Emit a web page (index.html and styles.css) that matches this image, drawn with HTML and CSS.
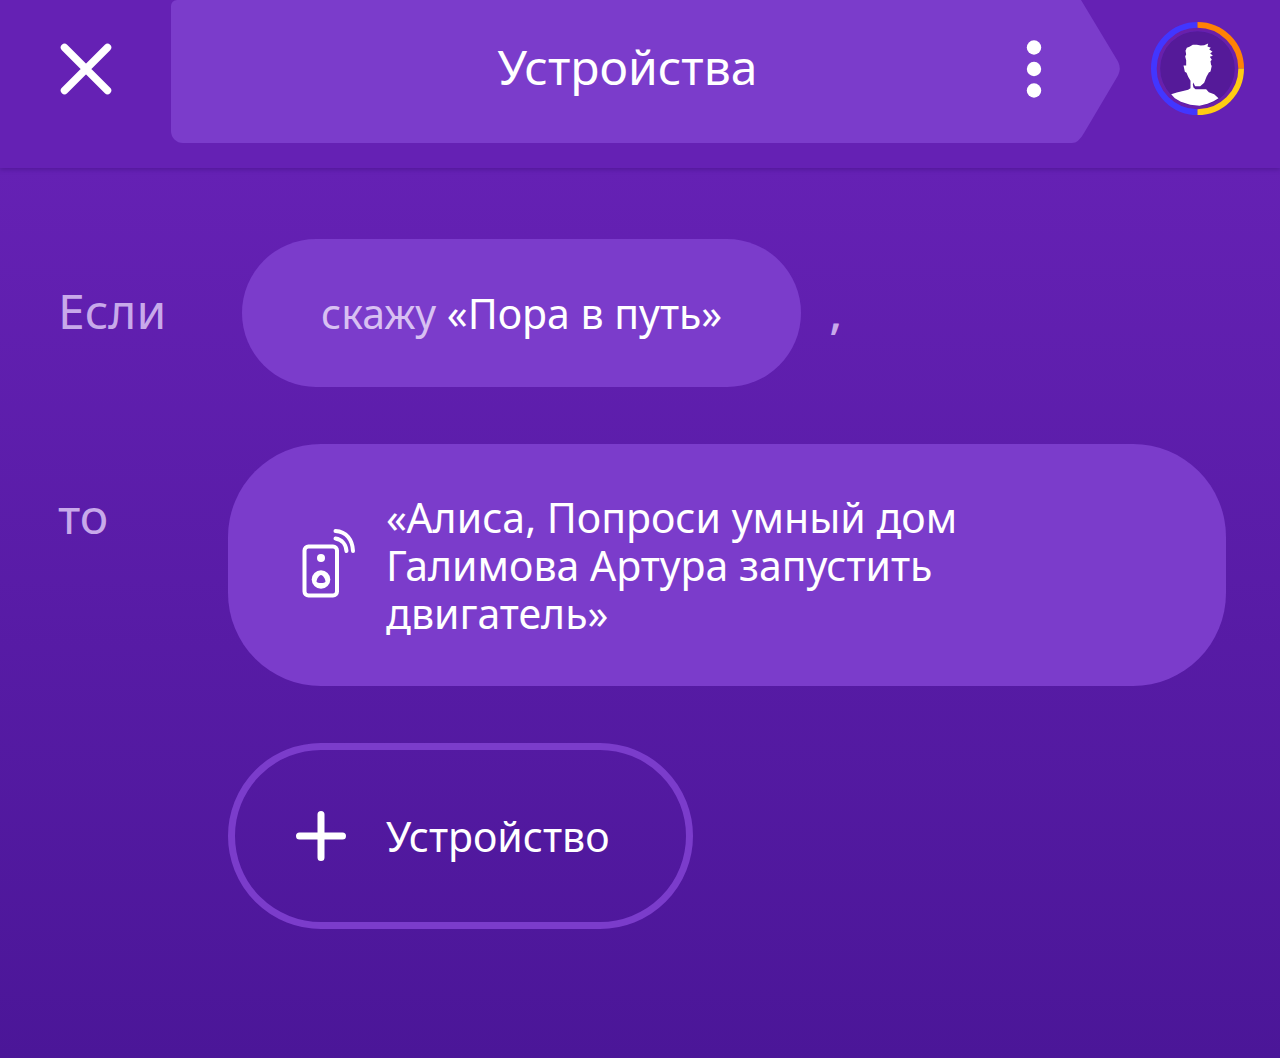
FILE: index.html
```html
<!DOCTYPE html>
<html lang="ru">
<head>
  <meta charset="UTF-8" />
  <meta name="viewport" content="width=device-width, initial-scale=1.0"/>
  <title>Устройства</title>
  <link rel="stylesheet" href="styles.css">
</head>
<body>
  <header class="header">
    <button class="close" type="button" aria-label="Закрыть">
      <svg width="52" height="52" viewBox="0 0 52 52">
        <path d="M4.500 4.500L47.500 47.500M47.500 4.500L4.500 47.500" fill="none" stroke="#fff" stroke-width="7.500" stroke-linecap="round"/>
      </svg>
    </button>
    <div class="title-bar">
      <h1 class="title">Устройства</h1>
      <button class="menu" type="button" aria-label="Меню">
        <svg width="16" height="60" viewBox="0 0 16 60">
          <g fill="#fff">
            <circle cx="8" cy="8.500" r="7.200"/>
            <circle cx="8" cy="30" r="7.200"/>
            <circle cx="8" cy="51.500" r="7.200"/>
          </g>
        </svg>
      </button>
    </div>
    <svg class="title-tip" width="48" height="143" viewBox="0 0 48 143">
      <path d="M0 0H9L46 61.500Q49.500 68.500 46 75.500L12 133Q6.500 143 0 143Z" fill="#7b3ccb"/>
    </svg>
    <a class="avatar" href="#" aria-label="Профиль">
      <svg width="93" height="93" viewBox="34.500 35.500 279 279">
        <circle cx="174" cy="175" r="112" fill="#551a99"/>
        <circle cx="174" cy="175" r="118" fill="none" stroke="#6b20a8" stroke-width="8"/>
        <g fill="none" stroke-width="17">
          <path d="M174 44A131 131 0 0 0 174 306" stroke="#4236ff"/>
          <path d="M174 44A131 131 0 0 1 305 175" stroke="#ff8205"/>
          <path d="M305 175A131 131 0 0 1 174 306" stroke="#ffcc12"/>
        </g>
        <path d="M142 113L150 110L160 104H172L184 106L194 105L206 100L204 109L214 113L209 117L219 125L212 129L220 137L211 140L217 149L213 153L215 166H217L213 184L208 187L201 200L194 218L182 228H167L161 217L160 224L162 232L168 237H200L208 246L224 252L237 264L222 273L204 281L180 287L152 284L124 275L106 264L95 252L112 247L146 239L153 234V212L146 200L141 188L136 185L132 166H140V150L137 139L140 132L138 122Z" fill="#fff"/>
      </svg>
    </a>
  </header>

  <main class="scenario">
    <div class="row">
      <span class="label">Если</span>
      <button class="phrase" type="button"><span class="muted">скажу</span> «Пора в путь»</button>
      <span class="comma">,</span>
    </div>
    <div class="row">
      <span class="label">то</span>
      <div class="actions">
        <button class="action" type="button">
          <svg width="56" height="74" viewBox="0 0 56 74">
            <g fill="none" stroke="#fff" stroke-width="4" stroke-linecap="round">
              <rect x="4.500" y="18.500" width="32.500" height="49" rx="4"/>
              <path d="M35.500 10.500C42 11.500 46 16.500 46.500 23M35.500 3C46.500 3.500 52.500 12 53 23"/>
            </g>
            <circle cx="21" cy="30" r="4" fill="#fff"/>
            <circle cx="21" cy="51.500" r="9.300" fill="#fff"/>
            <path d="M21 47C23 47 25.500 51.500 25.500 53.500C25 55.500 17 55.500 16.500 53.500C16.500 51.500 19 47 21 47Z" fill="#7b3ccb"/>
          </svg>
          <span class="action-text">«Алиса, Попроси умный дом Галимова Артура запустить двигатель»</span>
        </button>
        <button class="add" type="button">
          <svg width="56" height="56" viewBox="0 0 56 56">
            <path d="M21 6.500V49.500M-.500 28H42.500" fill="none" stroke="#fff" stroke-width="7" stroke-linecap="round"/>
          </svg>
          <span>Устройство</span>
        </button>
      </div>
    </div>
  </main>
</body>
</html>
```

FILE: styles.css
```css
* {
  box-sizing: border-box;
}
body {
  margin: 0;
  min-height: 100vh;
  font-family: "Noto Sans", "Open Sans", sans-serif;
  color: #fff;
  background: linear-gradient(to bottom, #6521b4 168px, #4b1698);
}
h1 {
  margin: 0;
}
button {
  padding: 0;
  border: none;
  background: none;
  color: inherit;
  font: inherit;
  cursor: pointer;
}
svg {
  display: block;
  overflow: visible;
  flex: none;
}
.header {
  display: flex;
  align-items: flex-start;
  height: 168px;
  background: #6521b4;
  box-shadow: 0 2px 4px rgba(60, 15, 120, 0.4);
}
.close {
  display: flex;
  justify-content: center;
  align-items: center;
  width: 171px;
  height: 137px;
}
.title-bar {
  flex: 1;
  display: grid;
  grid-template-columns: 88px 1fr 76px;
  align-items: center;
  height: 143px;
  padding-bottom: 6px;
  border-radius: 6px 0 0 12px;
  background: #7b3ccb;
}
.title {
  grid-column: 2;
  padding-bottom: 4px;
  text-align: center;
  font-size: 48px;
  line-height: 60px;
  font-weight: 400;
}
.menu {
  display: flex;
  justify-content: center;
}
.avatar {
  margin: 22px 36px 0 31px;
}
.scenario {
  padding: 71px 54px 56px 58px;
}
.row {
  display: flex;
  align-items: flex-start;
  margin-bottom: 57px;
}
.label {
  width: 170px;
  flex: none;
  font-size: 48px;
  line-height: 144px;
  color: #c8a9ea;
}
.phrase {
  height: 148px;
  margin-left: 14px;
  padding: 0 79px;
  border-radius: 74px;
  background: #7b3ccb;
  font-size: 41px;
  line-height: 48px;
}
.muted {
  color: #d8c0f2;
}
.comma {
  margin-left: 28px;
  font-size: 48px;
  font-weight: 500;
  line-height: 144px;
  color: #c8a9ea;
}
.actions {
  flex: 1;
  display: flex;
  flex-direction: column;
  align-items: flex-start;
  gap: 57px;
}
.action,
.add {
  display: flex;
  align-items: center;
  gap: 30px;
  border-radius: 93px;
  font-size: 41px;
  line-height: 48px;
  text-align: left;
}
.action {
  width: 100%;
  min-height: 242px;
  padding: 48px 72px;
  background: #7b3ccb;
}
.action-text {
  max-width: 600px;
}
.add {
  height: 186px;
  padding: 0 76px 0 65px;
  border: 7px solid #7b3ccb;
}
```
